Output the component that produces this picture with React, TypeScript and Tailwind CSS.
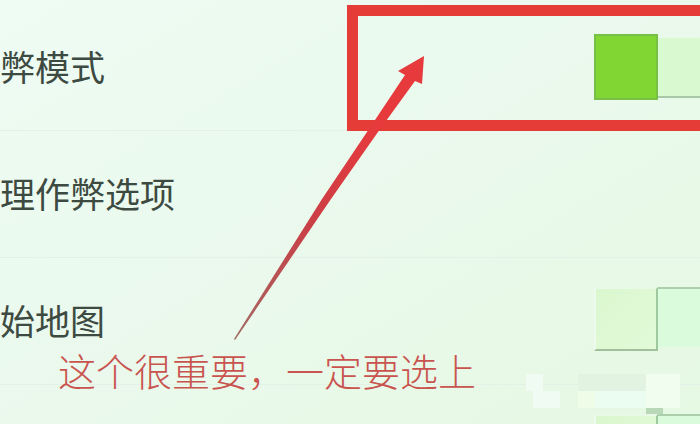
interface SettingRow {
  label: string;
  name: string;
  control: "toggle" | "none";
  checked?: boolean;
}

const rows: SettingRow[] = [
  { label: "弊模式", name: "mode", control: "toggle", checked: true },
  { label: "理作弊选项", name: "options", control: "none" },
  { label: "始地图", name: "map", control: "toggle" },
  { label: "", name: "more", control: "toggle" },
];

interface ToggleProps {
  id: string;
  checked?: boolean;
  ariaLabel?: string;
}

function Toggle({ id, checked = false, ariaLabel }: ToggleProps) {
  return (
    <span className="-mr-6 flex shrink-0">
      <input
        id={id}
        type="checkbox"
        role="switch"
        aria-label={ariaLabel}
        defaultChecked={checked}
        className="peer sr-only"
      />
      {/* Knob */}
      <span className="h-16 w-16 border-2 border-t-[#e9f9e8] border-l-[#edfbee] border-r-[#a0c89e] border-b-[#a0bf9b] bg-linear-to-br from-[#daf7cf] to-[#e2fad8] peer-checked:mt-[6px] peer-checked:h-[66px] peer-checked:border-[#78bf45] peer-checked:bg-none peer-checked:bg-[#81d634]" />
      {/* Track */}
      <span className="h-[60px] w-[66px] border-t-2 border-[#add0ac] bg-[#dafbdc] peer-checked:mt-[10px] peer-checked:border-t-0 peer-checked:border-b-2 peer-checked:border-[#a8c9a5] peer-checked:bg-[#d9fad0]" />
    </span>
  );
}

function Arrow() {
  return (
    <svg
      viewBox="0 0 190 284"
      className="pointer-events-none absolute top-14 right-[276px] h-[284px] w-[190px]"
      aria-hidden="true"
    >
      <defs>
        <linearGradient id="shaft" x1="0" y1="1" x2="1" y2="0">
          <stop offset="0" stopColor="#a26a63" />
          <stop offset="0.4" stopColor="#ca3f47" />
          <stop offset="0.75" stopColor="#e63a3c" />
        </linearGradient>
      </defs>
      <path d="M190 0 164 15 171 19 133 76 88 143 0 283 1 284 97 143 144 76 181 25 188 28Z" fill="url(#shaft)" />
    </svg>
  );
}

function Mosaic() {
  return (
    <svg
      viewBox="0 0 156 40"
      className="pointer-events-none absolute top-[374px] right-5 h-10 w-[156px]"
      aria-hidden="true"
    >
      <path d="M2 0h17v17h17v17H9V17H2z" fill="#f0fbf4" />
      <path d="M54 0h68v17H54z" fill="#e3f3e2" />
      <path d="M54 17h17v17H54z" fill="#effde8" />
      <path d="M71 17h51v17H71z" fill="#ebfdf0" />
      <path d="M122 0h34v34h-34z" fill="#f0fdef" />
      <path d="M122 34h17v6h-17z" fill="#b9d8b8" />
    </svg>
  );
}

export default function App() {
  return (
    <main className="relative h-screen overflow-hidden bg-linear-to-br from-[#eefcf4] via-[#eaf9ec] to-[#e6f9e3] pt-1 font-['Noto_Sans_CJK_SC',sans-serif]">
      <ul>
        {rows.map((row) => (
          <li
            key={row.name}
            className="flex h-[127px] items-start justify-between border-b border-[#e3f1e6]"
          >
            {row.control === "toggle" ? (
              <label
                htmlFor={row.name}
                className="mt-[37px] text-[35px] leading-[50px] text-[#3d4a41]"
              >
                {row.label}
              </label>
            ) : (
              <span className="mt-[37px] text-[35px] leading-[50px] text-[#3d4a41]">
                {row.label}
              </span>
            )}
            {row.control === "toggle" && (
              <span className={row.checked ? "mt-6" : "mt-[29px]"}>
                <Toggle
                  id={row.name}
                  checked={row.checked}
                  ariaLabel={row.label ? undefined : row.name}
                />
              </span>
            )}
          </li>
        ))}
      </ul>

      {/* Highlight around the first switch */}
      <div className="pointer-events-none absolute top-[5px] -right-4 h-[126px] w-[369px] border-[11px] border-[#e63c38]" />
      <Arrow />
      <p className="absolute top-[342px] right-[224px] text-[38px] leading-[56px] font-light whitespace-nowrap text-[#c9544f]">
        这个很重要，一定要选上
      </p>
      <Mosaic />
    </main>
  );
}
